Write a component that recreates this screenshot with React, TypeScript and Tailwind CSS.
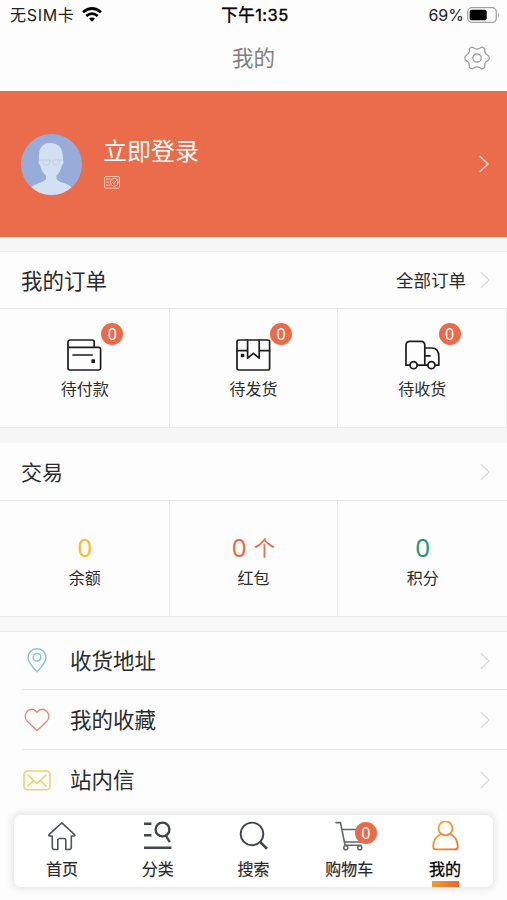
import React from "react";

function Badge({ className }: { className: string }) {
  return (
    <span
      className={`absolute flex h-[22px] w-[22px] items-center justify-center rounded-full bg-[#ec6a49] font-['Noto_Sans',sans-serif] text-[16px] leading-none text-white ${className}`}
    >
      0
    </span>
  );
}

function Chevron({ color }: { color: string }) {
  return (
    <svg width="10" height="18" viewBox="0 0 10 18" fill="none" stroke={color} strokeWidth="1.4">
      <path d="M0.7 1L9 9L0.7 17" />
    </svg>
  );
}

const line = { fill: "none", strokeLinecap: "round", strokeLinejoin: "round" } as const;

function WalletIcon() {
  return (
    <svg width="35" height="32" viewBox="0 0 35 32" stroke="#1c1c1c" strokeWidth="1.7" {...line}>
      <path d="M1 8.3V3A2 2 0 0 1 3 1H25.2A2 2 0 0 1 27.2 3V8" />
      <path d="M1 8.3H32A1.8 1.8 0 0 1 33.6 10V29.2A1.8 1.8 0 0 1 32 31H2.8A1.8 1.8 0 0 1 1 29.2Z" />
      <path d="M6 16H25" />
      <rect x="25.2" y="21.2" width="2" height="2" fill="#1c1c1c" />
    </svg>
  );
}

function BoxIcon() {
  return (
    <svg width="35" height="32" viewBox="0 0 35 32" stroke="#1c1c1c" strokeWidth="1.7" {...line}>
      <rect x="1" y="1" width="32.6" height="30" rx="1.8" />
      <path d="M1 11.6H11.6M23.2 11.6H33.6M11.6 1V19.2L17.4 14.4L23.2 19.2V1" />
      <rect x="5.6" y="15.5" width="1.8" height="1.8" fill="#1c1c1c" />
    </svg>
  );
}

function TruckIcon() {
  return (
    <svg width="35" height="32" viewBox="0 0 35 32" stroke="#1c1c1c" strokeWidth="1.7" {...line}>
      <path d="M4.8 26.2H1V6A3.5 3.5 0 0 1 4.5 2.4H16.2A3.5 3.5 0 0 1 19.8 6V26.2H12.2" />
      <path d="M19.8 9H26.5Q33.8 9 33.8 17.5V26.2H30.3M22.6 26.2H19.8M20 16.8H25" />
      <circle cx="8.6" cy="26.2" r="3.5" />
      <circle cx="26.4" cy="26.2" r="3.5" />
    </svg>
  );
}

function GearIcon() {
  return (
    <svg width="26" height="24" viewBox="0 0 26 24" stroke="#999" strokeWidth="1.2" {...line}>
      <path d="M7.3 1.3Q8.5 0.7 9.5 1.8Q13 4.4 16.5 1.8Q17.5 0.7 18.7 1.3L20.2 2.2Q21 2.8 20.7 4Q20.3 7.8 23.6 9.2Q25.2 9.8 25.2 12Q25.2 14.2 23.6 14.8Q20.3 16.2 20.7 20Q21 21.2 20.2 21.8L18.7 22.7Q17.5 23.3 16.5 22.2Q13 19.6 9.5 22.2Q8.5 23.3 7.3 22.7L5.8 21.8Q5 21.2 5.3 20Q5.7 16.2 2.4 14.8Q0.8 14.2 0.8 12Q0.8 9.8 2.4 9.2Q5.7 7.8 5.3 4Q5 2.8 5.8 2.2Z" />
      <circle cx="13" cy="12" r="4.2" />
    </svg>
  );
}

function Avatar() {
  return (
    <svg width="61" height="61" viewBox="0 0 61 61">
      <defs>
        <clipPath id="face">
          <circle cx="30.5" cy="30.5" r="30.5" />
        </clipPath>
      </defs>
      <g clipPath="url(#face)">
        <rect width="61" height="61" fill="#98acda" />
        <path
          d="M18 26Q16.5 9 29.5 9Q42.5 9 42 26Q43.5 29 41 31Q39.5 38 35.5 41.5V45Q37 47.5 44 49.5Q50 51.5 53 56V62H8V56Q10 51.5 17 49.5Q23 47.5 25 45V41.5Q20.5 38 19 31Q16.5 29 18 26Z"
          fill="#d3dff2"
        />
        <path
          d="M18 26H22M22 26H28.5V29Q28.5 31 25 31Q22 31 22 28ZM32 26H38.5V28Q38.5 31 35.5 31Q32 31 32 29ZM28.5 27H32M38.5 26H42"
          fill="none"
          stroke="#c2cee4"
          strokeWidth="0.9"
        />
      </g>
    </svg>
  );
}

function CardIcon() {
  return (
    <svg width="16" height="13" viewBox="0 0 16 13" stroke="#f8c4b5" strokeWidth="1" {...line}>
      <rect x="0.6" y="0.6" width="14.8" height="11.6" rx="0.8" />
      <circle cx="10.2" cy="6.2" r="3.9" />
      <path d="M2.5 3.2H5.5M2.5 6.2H4.5M2.5 9.2H5.5M8.4 6L9.8 7.6L13.5 3.2" />
    </svg>
  );
}

function PinIcon() {
  return (
    <svg width="20" height="25" viewBox="0 0 20 25" stroke="#7cc3ea" strokeWidth="1.4" {...line}>
      <path d="M10 23.8Q1 14.5 1 9.5A9 8.7 0 0 1 19 9.5Q19 14.5 10 23.8Z" />
      <circle cx="10" cy="9.2" r="3.8" />
    </svg>
  );
}

function HeartIcon() {
  return (
    <svg width="26" height="24" viewBox="0 0 26 24" stroke="#ee8a71" strokeWidth="1.4" {...line}>
      <path d="M13 22.8L3.2 13.2C-3 6.5 6.5-3.8 13 4.2C19.5-3.8 29 6.5 22.8 13.2Z" />
    </svg>
  );
}

function MailIcon() {
  return (
    <svg width="28" height="21" viewBox="0 0 28 21" stroke="#f3cf6d" strokeWidth="1.6" {...line}>
      <rect x="1" y="1" width="26" height="18.8" rx="3.5" />
      <path d="M5 5.2L14 13.5L23 5.2M5 15.8L10 11M23 15.8L18 11" />
    </svg>
  );
}

function HomeIcon() {
  return (
    <svg width="29" height="30" viewBox="0 0 29 30" stroke="#50555c" strokeWidth="1.6" {...line}>
      <path d="M14.8 1.9L27.6 13.6Q28.4 15 26.8 15H24.3V26.2Q24.3 28.5 21.8 28.5H18.8V19.5Q18.8 17.5 16.8 17.5H12.8Q10.8 17.5 10.8 19.5V28.5H7.8Q5.3 28.5 5.3 26.2V15H2.8Q1.100 15 2 13.6Z" />
    </svg>
  );
}

function CategoryIcon() {
  return (
    <svg width="29" height="30" viewBox="0 0 29 30" stroke="#41454c" strokeWidth="2.4" fill="none">
      <path d="M1 2.8H8.5M1 14.2H8.5M1 26.7H28.5M22.8 14.5L26.8 21.2" />
      <circle cx="19.5" cy="8.5" r="6.9" />
    </svg>
  );
}

function SearchIcon() {
  return (
    <svg width="29" height="30" viewBox="0 0 29 30" stroke="#41454c" strokeWidth="1.9" fill="none">
      <circle cx="13" cy="12.9" r="11.3" />
      <path d="M21 20.9L28 27.8" strokeWidth="2.6" />
    </svg>
  );
}

function CartIcon() {
  return (
    <svg width="29" height="30" viewBox="0 0 29 30" stroke="#62676e" strokeWidth="1.6" {...line}>
      <path d="M1 1.6H5.5L10 24.2H26M7 8.5H28L25.5 21H9.3" />
      <circle cx="10.8" cy="26.7" r="2" />
      <circle cx="24.8" cy="26.7" r="2" />
    </svg>
  );
}

function UserIcon() {
  return (
    <svg width="29" height="30" viewBox="0 0 29 30" stroke="url(#warm)" strokeWidth="1.8" {...line}>
      <defs>
        <linearGradient id="warm" x1="0" y1="0" x2="29" y2="30" gradientUnits="userSpaceOnUse">
          <stop offset="0.1" stopColor="#f5aa32" />
          <stop offset="1" stopColor="#e96b2c" />
        </linearGradient>
      </defs>
      <circle cx="14.5" cy="7.3" r="7" />
      <path d="M10 13Q2.200 16.5 2.2 25.4Q2.2 28.4 5.2 28.4H23.8Q26.8 28.4 26.8 25.4Q26.8 16.5 19 13" />
    </svg>
  );
}

const orders = [
  { label: "待付款", icon: <WalletIcon /> },
  { label: "待发货", icon: <BoxIcon /> },
  { label: "待收货", icon: <TruckIcon /> },
];

const assets = [
  { label: "余额", value: "0", unit: "", color: "text-[#f5be35]" },
  { label: "红包", value: "0", unit: "个", color: "text-[#eb6c4b]" },
  { label: "积分", value: "0", unit: "", color: "text-[#2f9580]" },
];

const links = [
  { label: "收货地址", icon: <PinIcon /> },
  { label: "我的收藏", icon: <HeartIcon /> },
  { label: "站内信", icon: <MailIcon /> },
];

const tabs = [
  { label: "首页", icon: <HomeIcon /> },
  { label: "分类", icon: <CategoryIcon /> },
  { label: "搜索", icon: <SearchIcon /> },
  { label: "购物车", icon: <CartIcon />, badge: true },
  { label: "我的", icon: <UserIcon />, active: true },
];

export default function App() {
  return (
    <div className="relative h-[900px] w-[507px] overflow-hidden bg-[#fdfdfd] font-['Noto_Sans_CJK_SC',sans-serif] text-[#2b2b2b]">
      <div className="grid h-[29px] grid-cols-3 items-center pr-[7px] pl-[10px] font-[Inter,'Noto_Sans_CJK_SC',sans-serif] text-[16px] text-[#222]">
        <div className="flex items-center gap-[7px]">
          <span className="whitespace-nowrap tracking-[0.7px]">无SIM卡</span>
          <svg width="20" height="15" viewBox="0 0 20 15" fill="none" stroke="#000" strokeWidth="2.7">
            <path d="M1 5.3Q10-2.3 19 5.3M4.3 9Q10 4.2 15.7 9" />
            <path d="M7 11.6Q10 9.2 13 11.6L10 14.7Z" fill="#000" stroke="none" />
          </svg>
        </div>
        <div className="pt-[1px] text-center text-[16.5px] tracking-[0.5px] text-black [-webkit-text-stroke:0.4px]">
          下午1:35
        </div>
        <div className="flex items-center justify-end gap-[3px]">
          <span>69%</span>
          <svg width="33" height="16" viewBox="0 0 33 16">
            <rect x="0.7" y="0.7" width="28.6" height="14.6" rx="4" fill="none" stroke="#a2a2a2" strokeWidth="1.3" />
            <rect x="2.7" y="2.7" width="17" height="10.6" rx="2" fill="#000" />
            <path d="M31 5.5Q33 8 31 10.5Z" fill="#a2a2a2" />
          </svg>
        </div>
      </div>

      <div className="grid h-[62px] grid-cols-3 items-center px-[17px] pb-[5px]">
        <h1 className="col-start-2 text-center text-[21.5px] text-[#808080]">我的</h1>
        <div className="flex justify-end">
          <GearIcon />
        </div>
      </div>

      <div className="flex h-[146px] items-center bg-[#eb6c4b] pr-[18px] pl-[21px]">
        <Avatar />
        <div className="ml-[21px] flex flex-1 flex-col gap-[10px] pb-[5px]">
          <span className="text-[24px] leading-[32px] text-white">立即登录</span>
          <span className="pl-[1px]">
            <CardIcon />
          </span>
        </div>
        <Chevron color="#fbd9cf" />
      </div>

      <div className="h-[14px] bg-[#f6f6f6]" />

      <div className="flex h-[58px] items-center justify-between border-y border-[#ebebeb] pr-[17px] pl-[21px]">
        <h2 className="pt-[1px] text-[21.5px]">我的订单</h2>
        <div className="flex items-center gap-[14px] text-[17.5px]">
          <span>全部订单</span>
          <Chevron color="#dcdcdc" />
        </div>
      </div>
      <div className="grid h-[119px] grid-cols-3 border-b border-[#ebebeb] pl-[1px]">
        {orders.map((item) => (
          <div key={item.label} className="flex flex-col items-center border-r border-[#ebebeb] pt-[30px]">
            <div className="relative">
              {item.icon}
              <Badge className="-top-[16px] left-[34px]" />
            </div>
            <span className="mt-[5px] text-[16px] leading-[24px]">{item.label}</span>
          </div>
        ))}
      </div>

      <div className="h-[15px] bg-[#f6f6f6]" />

      <div className="flex h-[58px] items-center justify-between border-b border-[#ebebeb] pr-[17px] pl-[21px]">
        <h2 className="text-[21px]">交易</h2>
        <Chevron color="#dcdcdc" />
      </div>
      <div className="grid h-[116px] grid-cols-3 border-b border-[#ebebeb] pl-[1px]">
        {assets.map((item) => (
          <div
            key={item.label}
            className="flex flex-col items-center border-r border-[#ebebeb] pt-[29px] last:border-r-0"
          >
            <div
              className={`flex items-center gap-[7px] font-['Noto_Sans',sans-serif] text-[26px] leading-[34px] ${item.color}`}
            >
              {item.value}
              {item.unit && (
                <span className="font-['Noto_Sans_CJK_SC',sans-serif] text-[21.5px] leading-[34px]">{item.unit}</span>
              )}
            </div>
            <span className="mt-[1px] text-[16px] leading-[24px]">{item.label}</span>
          </div>
        ))}
      </div>

      <div className="h-[14px] bg-[#f6f6f6]" />

      <div className="border-t border-[#ebebeb] pl-[22px]">
        {links.map((item) => (
          <div
            key={item.label}
            className="flex h-[60px] items-center border-b border-[#e6e6e6] pr-[17px] first:h-[58px] last:border-b-0"
          >
            <div className="flex w-[30px] justify-center">{item.icon}</div>
            <span className="ml-[18px] flex-1 pb-[1px] text-[21.5px]">{item.label}</span>
            <Chevron color="#dcdcdc" />
          </div>
        ))}
      </div>

      <nav className="absolute top-[815px] left-[14px] grid h-[72px] w-[479px] grid-cols-5 rounded-[7px] bg-white shadow-[0_0_6px_3px_rgba(0,0,0,0.08)]">
        {tabs.map((tab) => (
          <div key={tab.label} className="relative flex flex-col items-center pt-[6px]">
            <div className="relative">
              {tab.icon}
              {tab.badge && <Badge className="top-[1px] left-[20px]" />}
            </div>
            <span
              className={`mt-[5px] text-[16px] leading-[24px] ${tab.active ? "text-black [-webkit-text-stroke:0.3px]" : "[-webkit-text-stroke:0.2px]"}`}
            >
              {tab.label}
            </span>
            {tab.active && (
              <div className="absolute bottom-0 h-[6px] w-[27px] bg-gradient-to-r from-[#f19a33] to-[#e9652b]" />
            )}
          </div>
        ))}
      </nav>
    </div>
  );
}
